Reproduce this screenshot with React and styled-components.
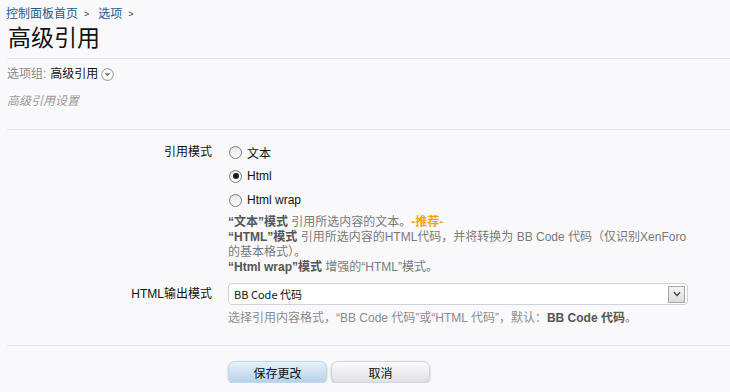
import React from 'react';
import styled, { createGlobalStyle } from 'styled-components';

const GlobalStyle = createGlobalStyle`
  html, body {
    margin: 0;
    padding: 0;
    background: #f9f9fc;
  }
  body {
    font-family: "Liberation Sans", "Noto Sans CJK SC", sans-serif;
    font-size: 12px;
    color: #000;
  }
`

const Page = styled.div`
  padding-left: 7px;
  width: 723px;
`

const Breadcrumb = styled.div`
  display: flex;
  align-items: center;
  padding-top: 4px;
  height: 20px;
  line-height: 16px;
  margin-left: -1px;
`

const Crumb = styled.a`
  color: #1d5a8e;
  text-decoration: none;
  font-size: 12px;
`

const Arrow = styled.span`
  color: #333;
  font-size: 9px;
  margin: 0 9px 0 6px;
`

const Title = styled.h1`
  margin: 0;
  font-size: 23px;
  font-weight: normal;
  line-height: 28px;
  color: #111;
  padding-bottom: 6px;
  border-bottom: 1px solid #d7ecfb;
  padding-left: 1px;
`

const GroupLine = styled.div`
  display: flex;
  align-items: center;
  margin-top: 7px;
  line-height: 16px;
  font-size: 12px;
`

const GroupLabel = styled.span`
  color: #8a8a8a;
  margin-right: 4px;
`

const GroupValue = styled.span`
  color: #111;
`

const GroupIcon = styled.svg`
  margin-left: 3px;
  width: 13px;
  height: 13px;
`

const Description = styled.div`
  margin-top: 11px;
  line-height: 16px;
  font-style: italic;
  color: #9a9a9a;
  font-size: 12px;
  padding-bottom: 20px;
  border-bottom: 1px solid #dbe5ef;
`

const Form = styled.div`
  padding-top: 10px;
  padding-bottom: 19px;
  border-bottom: 1px solid #dbe5ef;
`

const Row = styled.div`
  display: grid;
  grid-template-columns: 205px 460px;
  column-gap: 16px;
  margin-top: ${p => p.gap || 0}px;
`

const Label = styled.div`
  text-align: right;
  line-height: ${p => p.lh || 24}px;
  color: #111;
`

const Controls = styled.div`
  display: flex;
  flex-direction: column;
`

const RadioItem = styled.label`
  display: flex;
  align-items: center;
  height: 24px;
  color: #111;
`

const RadioDot = styled.span`
  position: relative;
  box-sizing: border-box;
  width: 13px;
  height: 13px;
  border-radius: 50%;
  border: 1px solid #7d7d7d;
  background: linear-gradient(#e6e6e6, #ffffff);
  margin: 0 5px 0 1px;
  &::after {
    content: '';
    display: ${p => (p.checked ? 'block' : 'none')};
    position: absolute;
    left: 2.5px;
    top: 2.5px;
    width: 6px;
    height: 6px;
    border-radius: 50%;
    background: #1a1a1a;
  }
`

const Explain = styled.div`
  margin-top: 3px;
  color: #7a7a7a;
  font-size: 12px;
`

const ExplainLine = styled.div`
  line-height: 15px;
`

const Strong = styled.b`
  color: #555;
`

const Recommend = styled.b`
  color: #f5a300;
`

const Select = styled.div`
  box-sizing: border-box;
  display: flex;
  align-items: center;
  justify-content: space-between;
  height: 22px;
  background: #fff;
  border: 1px solid #cfd1dc;
  border-radius: 4px;
  padding: 0 2px 0 5px;
  font-family: "Noto Sans CJK SC", sans-serif;
  font-size: 11px;
  color: #111;
`

const SelectButton = styled.span`
  box-sizing: border-box;
  display: flex;
  align-items: center;
  justify-content: center;
  width: 17px;
  height: 17px;
  border: 1px solid #a8a8a8;
  background: linear-gradient(#f4f4f4, #dcdcdc);
`

const Hint = styled.div`
  margin-top: 5px;
  line-height: 16px;
  color: #8c8c8c;
  font-size: 12px;
`

const Buttons = styled.div`
  display: flex;
  gap: 4px;
  margin: 15px 0 0 221px;
`

const Button = styled.button`
  width: 99px;
  height: 22px;
  border-radius: 7px;
  border: 1px solid ${p => (p.primary ? '#c3d7ea' : '#d3d3de')};
  background: ${p => (p.primary
    ? 'linear-gradient(#e8f1f9, #b5d2ea)'
    : 'linear-gradient(#fbfbfd, #dfdfe9)')};
  box-shadow: 0 1px 2px rgba(0, 0, 0, 0.3);
  font-family: "Liberation Sans", "Noto Sans CJK SC", sans-serif;
  font-size: 12px;
  color: #111;
  padding: 0;
`

const modes = [
  { label: '文本', checked: false },
  { label: 'Html', checked: true },
  { label: 'Html wrap', checked: false }
]

export default function App() {
  return (
    <Page>
      <GlobalStyle />
      <Breadcrumb>
        <Crumb href="#">控制面板首页</Crumb>
        <Arrow>&gt;</Arrow>
        <Crumb href="#">选项</Crumb>
        <Arrow>&gt;</Arrow>
      </Breadcrumb>
      <Title>高级引用</Title>
      <GroupLine>
        <GroupLabel>选项组:</GroupLabel>
        <GroupValue>高级引用</GroupValue>
        <GroupIcon viewBox="0 0 13 13">
          <circle cx="6.5" cy="6.5" r="5.8" fill="#fff" stroke="#a8a8a8" strokeWidth="1.2" />
          <path d="M3.6 5.2 H9.4 L6.5 8.2 Z" fill="#777" />
        </GroupIcon>
      </GroupLine>
      <Description>高级引用设置</Description>

      <Form>
        <Row>
          <Label>引用模式</Label>
          <Controls>
            {modes.map(m => (
              <RadioItem key={m.label}>
                <RadioDot checked={m.checked} />
                {m.label}
              </RadioItem>
            ))}
            <Explain>
              <ExplainLine>
                <Strong>“文本”模式</Strong> 引用所选内容的文本。<Recommend>-推荐-</Recommend>
              </ExplainLine>
              <ExplainLine>
                <Strong>“HTML”模式</Strong> 引用所选内容的HTML代码，并将转换为 BB Code 代码（仅识别XenForo的基本格式）。
              </ExplainLine>
              <ExplainLine>
                <Strong>“Html wrap”模式</Strong> 增强的“HTML”模式。
              </ExplainLine>
            </Explain>
          </Controls>
        </Row>
        <Row gap={8}>
          <Label lh={22}>HTML输出模式</Label>
          <Controls>
            <Select>
              <span>BB Code 代码</span>
              <SelectButton>
                <svg width="8" height="6" viewBox="0 0 8 6">
                  <path d="M1 1.2 L4 4.4 L7 1.2" fill="none" stroke="#444" strokeWidth="1.4" />
                </svg>
              </SelectButton>
            </Select>
            <Hint>
              选择引用内容格式，“BB Code 代码”或“HTML 代码”，默认：<Strong>BB Code 代码</Strong>。
            </Hint>
          </Controls>
        </Row>
      </Form>

      <Buttons>
        <Button primary>保存更改</Button>
        <Button>取消</Button>
      </Buttons>
    </Page>
  );
}
